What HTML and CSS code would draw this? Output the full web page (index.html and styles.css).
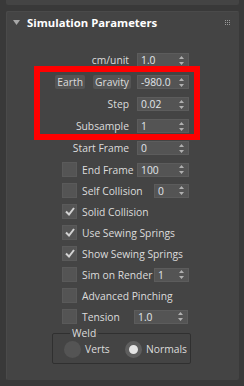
FILE: index.html
```html
<!DOCTYPE html>
<html lang="en">
  <head>
    <meta charset="UTF-8" />
    <meta name="viewport" content="width=device-width, initial-scale=1.0" />
    <title>Simulation Parameters</title>
    <link rel="stylesheet" href="styles.css">
  </head>
  <body>
    <!-- Previous rollout (cut off) -->
    <div class="prev-panel"></div>

    <div class="panel">
      <div class="panel-head">
        <svg class="caret" viewBox="0 0 7 5"><path d="M0 0h7L3.5 5z" /></svg>
        <span class="title">Simulation Parameters</span>
        <svg class="grip" viewBox="0 0 5 5">
          <rect x="0" y="0" width="1" height="1" /><rect x="2" y="0" width="1" height="1" /><rect x="4" y="0" width="1" height="1" />
          <rect x="0" y="2" width="1" height="1" /><rect x="2" y="2" width="1" height="1" /><rect x="4" y="2" width="1" height="1" />
          <rect x="0" y="4" width="1" height="1" /><rect x="2" y="4" width="1" height="1" /><rect x="4" y="4" width="1" height="1" />
        </svg>
      </div>

      <div class="rows">
        <div class="row spin-row">
          <span class="label">cm/unit</span>
          <div class="spinner"><span>1.0</span><svg class="arrows" viewBox="0 0 5 9"><path d="M2.5 0L5 3H0zM0 6h5L2.5 9z" /></svg></div>
        </div>
        <div class="row spin-row">
          <div class="label buttons">
            <button class="btn">Earth</button>
            <button class="btn">Gravity</button>
          </div>
          <div class="spinner"><span>-980.0</span><svg class="arrows" viewBox="0 0 5 9"><path d="M2.5 0L5 3H0zM0 6h5L2.5 9z" /></svg></div>
        </div>
        <div class="row spin-row">
          <span class="label">Step</span>
          <div class="spinner"><span>0.02</span><svg class="arrows" viewBox="0 0 5 9"><path d="M2.5 0L5 3H0zM0 6h5L2.5 9z" /></svg></div>
        </div>
        <div class="row spin-row">
          <span class="label">Subsample</span>
          <div class="spinner"><span>1</span><svg class="arrows" viewBox="0 0 5 9"><path d="M2.5 0L5 3H0zM0 6h5L2.5 9z" /></svg></div>
        </div>
        <div class="row spin-row short">
          <span class="label">Start Frame</span>
          <div class="spinner"><span>0</span><svg class="arrows" viewBox="0 0 5 9"><path d="M2.5 0L5 3H0zM0 6h5L2.5 9z" /></svg></div>
        </div>

        <div class="row check-row">
          <span class="check"></span>
          <span class="check-label w-end">End Frame</span>
          <div class="spinner"><span>100</span><svg class="arrows" viewBox="0 0 5 9"><path d="M2.5 0L5 3H0zM0 6h5L2.5 9z" /></svg></div>
        </div>
        <div class="row check-row">
          <span class="check"></span>
          <span class="check-label w-long">Self Collision</span>
          <div class="spinner narrow"><span>0</span><svg class="arrows" viewBox="0 0 5 9"><path d="M2.5 0L5 3H0zM0 6h5L2.5 9z" /></svg></div>
        </div>
        <div class="row check-row">
          <span class="check on"><svg viewBox="0 0 10 9"><path d="M1 4.5l3 3 5-6.5" /></svg></span>
          <span class="check-label">Solid Collision</span>
        </div>
        <div class="row check-row">
          <span class="check on"><svg viewBox="0 0 10 9"><path d="M1 4.5l3 3 5-6.5" /></svg></span>
          <span class="check-label">Use Sewing Springs</span>
        </div>
        <div class="row check-row">
          <span class="check on"><svg viewBox="0 0 10 9"><path d="M1 4.5l3 3 5-6.5" /></svg></span>
          <span class="check-label">Show Sewing Springs</span>
        </div>
        <div class="row check-row">
          <span class="check"></span>
          <span class="check-label w-long">Sim on Render</span>
          <div class="spinner narrow"><span>1</span><svg class="arrows" viewBox="0 0 5 9"><path d="M2.5 0L5 3H0zM0 6h5L2.5 9z" /></svg></div>
        </div>
        <div class="row check-row">
          <span class="check"></span>
          <span class="check-label">Advanced Pinching</span>
        </div>
        <div class="row check-row">
          <span class="check"></span>
          <span class="check-label w-tension">Tension</span>
          <div class="spinner tension"><span>1.0</span><svg class="arrows" viewBox="0 0 5 9"><path d="M2.5 0L5 3H0zM0 6h5L2.5 9z" /></svg></div>
        </div>
      </div>

      <!-- Weld group -->
      <fieldset class="weld">
        <legend>Weld</legend>
        <label class="radio-item"><span class="radio"></span>Verts</label>
        <label class="radio-item"><span class="radio on"></span>Normals</label>
      </fieldset>

      <!-- Annotation -->
      <div class="highlight"></div>
    </div>
  </body>
</html>
```

FILE: styles.css
```css
:root {
  --bg: #393939;
  --panel: #444444;
  --field: #545454;
  --field-border: #5c5c5c;
  --text: #dcdcdc;
}

* {
  box-sizing: border-box;
  margin: 0;
  padding: 0;
}
body {
  background: var(--bg);
  font-family: "Open Sans", "Noto Sans", sans-serif;
  font-size: 10.3px;
  color: var(--text);
  width: 244px;
  height: 386px;
  overflow: hidden;
  white-space: nowrap;
}

/* Rollouts */
.prev-panel {
  margin-left: 6px;
  width: 233px;
  height: 5px;
  background: var(--panel);
  border-radius: 0 0 2px 2px;
}
.panel {
  position: relative;
  margin: 6px 0 0 6px;
  width: 233px;
  height: 369px;
  background: var(--panel);
  border-radius: 2px;
  box-shadow: inset 1px 1px 0 #4a4a4a;
}

.panel-head {
  display: flex;
  align-items: center;
  height: 22px;
  padding-left: 7px;
  margin-bottom: 16px;
}
.caret {
  width: 7px;
  height: 5px;
  fill: #a8a8a8;
  margin-right: 7px;
  margin-top: 1px;
}
.title {
  font-weight: bold;
  font-size: 11.3px;
  color: #ffffff;
}
.grip {
  width: 5px;
  height: 5px;
  fill: #9a9a9a;
  margin-left: auto;
  margin-right: 9px;
}

/* Rows */
.row {
  display: flex;
  align-items: center;
  height: 21px;
}
.spin-row {
  height: 22px;
}
.spin-row .label {
  width: 123px;
  margin-right: 8px;
  text-align: right;
}
.buttons {
  display: flex;
  justify-content: flex-end;
  gap: 8px;
  margin-right: 6px !important;
  width: 125px !important;
}
.btn {
  font: inherit;
  color: var(--text);
  background: var(--field);
  border: none;
  border-radius: 2px;
  height: 14px;
  line-height: 14px;
  padding: 0 2px;
}

.spinner {
  display: flex;
  align-items: center;
  justify-content: space-between;
  width: 52px;
  height: 14px;
  padding: 0 4px 0 3px;
  background: var(--field);
  border: 1px solid var(--field-border);
  color: #e2e6ea;
}
.spinner.narrow {
  width: 35px;
}
.spinner.tension {
  width: 54px;
}
.arrows {
  width: 5px;
  height: 9px;
  fill: #b0b0b0;
}

.check-row {
  padding-left: 56px;
}
.check {
  width: 15px;
  height: 15px;
  background: var(--field);
  border: 1px solid #5a5a5a;
  margin-right: 5px;
  display: flex;
  align-items: center;
  justify-content: center;
  flex-shrink: 0;
}
.check svg {
  width: 10px;
  height: 9px;
  fill: none;
  stroke: #d2d2d2;
  stroke-width: 2;
}
.w-end { width: 55px; }
.w-long { width: 72px; }
.w-tension { width: 52px; }

/* Weld group */
.weld {
  margin: 1px 0 0 46px;
  width: 139px;
  height: 36px;
  border: 1px solid #303030;
  border-radius: 2px;
  display: flex;
  align-items: center;
  padding: 0 0 3px 11px;
}
.weld legend {
  margin-left: 6px;
  padding: 0 2px;
  line-height: 10px;
}
.radio-item {
  display: flex;
  align-items: center;
  gap: 4px;
}
.radio-item:first-of-type {
  width: 61px;
}
.radio {
  width: 17px;
  height: 17px;
  border-radius: 50%;
  background: var(--field);
}
.radio.on {
  background: #e4e4e4;
  border: 4px solid #5e5e5e;
}

/* Red annotation box */
.highlight {
  position: absolute;
  left: 28px;
  top: 55px;
  width: 166px;
  height: 74px;
  border: 6px solid #ff0000;
}
```
